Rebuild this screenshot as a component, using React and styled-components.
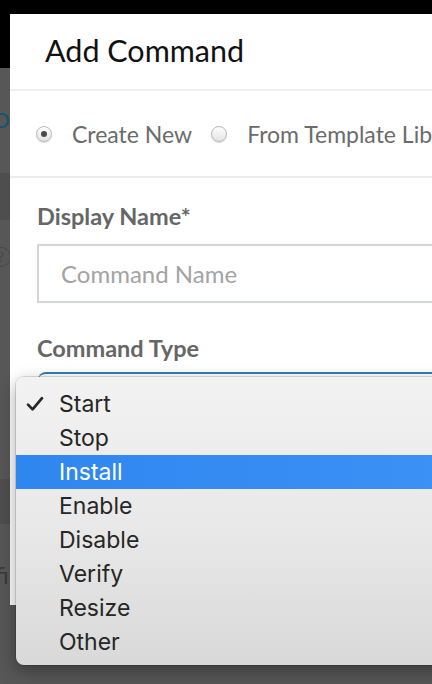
import React from "react";
import styled, { createGlobalStyle } from "styled-components";

const GlobalStyle = createGlobalStyle`
  html, body {
    margin: 0;
    padding: 0;
    width: 432px;
    height: 684px;
    overflow: hidden;
    background: #525252;
  }
  * { box-sizing: border-box; }
`;

const COMMAND_TYPES = ["Start", "Stop", "Install", "Enable", "Disable", "Verify", "Resize", "Other"];

const App = () => {
  return (
    <>
      <GlobalStyle />
      <Screen>
        <TopBar />
        <Behind>
          <PeekLink>De</PeekLink>
          <PeekBand />
          <PeekHelp>?</PeekHelp>
          <PeekBand $low />
          <PeekText>fi</PeekText>
        </Behind>

        <Modal>
          <ModalHeader>
            <Title>Add Command</Title>
          </ModalHeader>
          <RadioRow>
            <RadioOption>
              <Radio checked />
              Create New
            </RadioOption>
            <RadioOption>
              <Radio />
              From Template Library
            </RadioOption>
          </RadioRow>
          <Body>
            <Label>Display Name*</Label>
            <TextInput placeholder="Command Name" />
            <Label $gap>Command Type</Label>
            <SelectBox />
          </Body>
        </Modal>

        <Menu>
          {COMMAND_TYPES.map((t) => (
            <MenuItem key={t} $active={t === "Install"}>
              <Check>{t === "Start" ? <CheckIcon /> : null}</Check>
              {t}
            </MenuItem>
          ))}
        </Menu>
      </Screen>
    </>
  );
};

const CheckIcon = () => (
  <svg width="18" height="16" viewBox="0 0 18 16">
    <path d="M2 8.6 L6.6 13.4 L16 2.2" fill="none" stroke="#262626" strokeWidth="2.7" strokeLinecap="round" strokeLinejoin="round" />
  </svg>
);

const Screen = styled.div`
  position: relative;
  width: 432px;
  height: 684px;
  overflow: hidden;
  display: flex;
  flex-direction: column;
`;

const TopBar = styled.div`
  height: 68px;
  background: #000;
  flex-shrink: 0;
`;

const Behind = styled.div`
  flex: 1;
  background: #575757;
  display: flex;
  flex-direction: column;
  font-family: "Lato", sans-serif;
`;

const PeekLink = styled.div`
  margin-top: 38px;
  margin-left: -7px;
  color: #0e5674;
  font-size: 22px;
  line-height: 28px;
`;

const PeekBand = styled.div`
  margin-top: ${(p) => (p.$low ? "212px" : "39px")};
  height: ${(p) => (p.$low ? "45px" : "47px")};
  background: #4e4e4e;
`;

const PeekHelp = styled.div`
  margin-top: 27px;
  margin-left: -9px;
  width: 20px;
  height: 20px;
  border: 1.5px solid #474747;
  border-radius: 50%;
  color: #474747;
  font-size: 14px;
  line-height: 17px;
  text-align: center;
`;

const PeekText = styled.div`
  margin-top: 36px;
  margin-left: -5px;
  font-size: 24px;
  line-height: 30px;
  color: #3a3a3a;
`;

const Modal = styled.div`
  position: absolute;
  top: 14px;
  left: 10px;
  width: 520px;
  height: 591px;
  background: #fff;
  font-family: "Lato", sans-serif;
`;

const ModalHeader = styled.div`
  height: 77px;
  padding: 17px 0 0 35px;
  border-bottom: 2px solid #efefef;
`;

const Title = styled.h1`
  margin: 0;
  font-weight: 400;
  font-size: 30.5px;
  line-height: 38px;
  color: #111;
`;

const RadioRow = styled.div`
  height: 87px;
  display: flex;
  align-items: center;
  gap: 19px;
  padding-left: 26px;
  border-bottom: 2px solid #ececec;
  white-space: nowrap;
`;

const RadioOption = styled.label`
  display: flex;
  align-items: center;
  gap: 20px;
  font-size: 23px;
  color: #6b6b6b;
`;

const Radio = styled.span`
  width: 16px;
  height: 16px;
  border-radius: 50%;
  border: 1px solid #b9b9b9;
  background: linear-gradient(#fdfdfd, #e4e4e4);
  box-shadow: 0 1px 1px rgba(0, 0, 0, 0.15);
  display: flex;
  align-items: center;
  justify-content: center;
  &::after {
    content: "";
    width: 6px;
    height: 6px;
    border-radius: 50%;
    background: ${(p) => (p.checked ? "#4a4a4a" : "transparent")};
  }
`;

const Body = styled.div`
  padding: 24px 0 0 27px;
  display: flex;
  flex-direction: column;
`;

const Label = styled.div`
  font-weight: 700;
  font-size: 23.5px;
  line-height: 29px;
  color: #666;
  margin-top: ${(p) => (p.$gap ? "31px" : "0")};
`;

const TextInput = styled.input`
  margin-top: 13px;
  height: 59px;
  width: 420px;
  border: 2px solid #d3d6de;
  padding: 0 22px;
  font-family: "Lato", sans-serif;
  font-size: 24px;
  color: #333;
  outline: none;
  &::placeholder { color: #a3a3a3; }
`;

const SelectBox = styled.div`
  margin-top: 9px;
  margin-left: 1px;
  height: 40px;
  width: 420px;
  border-top: 2px solid #2f7fb5;
  border-radius: 8px 0 0 0;
`;

const Menu = styled.div`
  position: absolute;
  top: 377px;
  left: 16px;
  width: 480px;
  height: 288px;
  padding: 10px 0;
  border-radius: 8px;
  background: linear-gradient(180deg, #f2f2f2 0%, #e9e9e9 50%, #d9d9d9 100%);
  box-shadow: 0 0 0 1px rgba(0, 0, 0, 0.12), 0 6px 18px rgba(0, 0, 0, 0.35);
  font-family: "Inter", "Liberation Sans", sans-serif;
`;

const MenuItem = styled.div`
  height: 34px;
  display: flex;
  align-items: center;
  font-size: 23px;
  color: ${(p) => (p.$active ? "#fff" : "#262626")};
  background: ${(p) => (p.$active ? "linear-gradient(90deg, #2f86ef, #3d92f6)" : "transparent")};
`;

const Check = styled.span`
  width: 43px;
  padding-left: 10px;
  display: flex;
  align-items: center;
`;

export default App;
